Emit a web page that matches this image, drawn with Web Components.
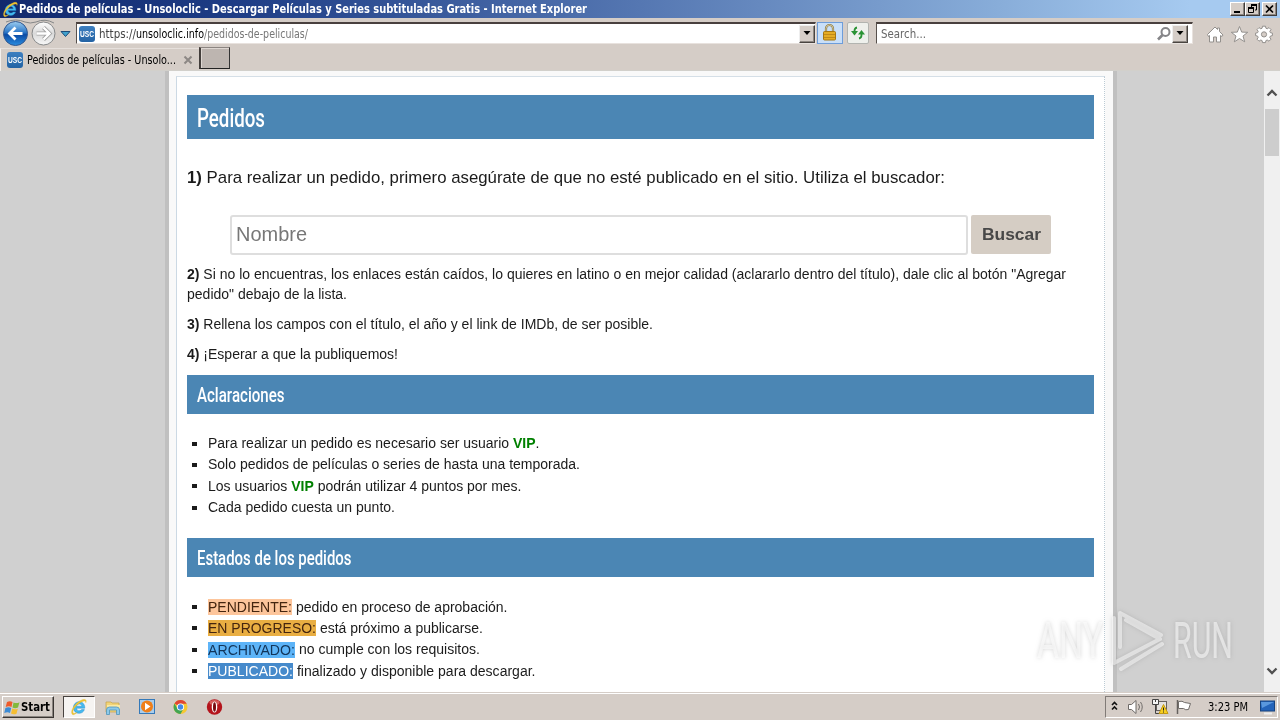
<!DOCTYPE html>
<html lang="es">
<head>
<meta charset="utf-8">
<title>Pedidos de películas - Unsoloclic</title>
<style>
html,body{margin:0;height:100%;overflow:hidden}
body{width:1280px;height:720px;font-family:"Liberation Sans",Arial,sans-serif}
</style>
</head>
<body>
<desktop-screen></desktop-screen>
<script>
const define = (name, html, after) => customElements.define(name, class extends HTMLElement {
  constructor(){ super(); this.attachShadow({mode:'open'}); }
  connectedCallback(){
    if(this.shadowRoot.childNodes.length) return;
    this.shadowRoot.innerHTML = html;
    if(after) after(this);
  }
});

/* One line of text set to a fixed measure (attribute w, in px). */
define('fit-text', `<style>:host{display:block;white-space:nowrap;flex:none}span{display:inline-block;transform-origin:0 50%;white-space:pre}</style><span><slot></slot></span>`, el => {
  const s = el.shadowRoot.querySelector('span'), w = +el.getAttribute('w');
  el.style.width = w + 'px';
  const n = s.getBoundingClientRect().width;
  if(n) s.style.transform = `scaleX(${w / n})`;
});

define('ie-logo', `<style>:host{display:block;flex:none}svg{display:block;width:100%;height:100%}</style>
<svg viewBox="0 0 20 20"><path d="M16.400 11.300H7.200c.2 1.800 1.400 2.900 3.100 2.900 1.300 0 2.100-.5 2.600-1.300h3.100c-.9 2.600-3 4.100-5.800 4.100-3.800 0-6.400-2.600-6.400-6.300 0-3.800 2.700-6.600 6.400-6.600s6.400 2.900 6.200 7.200zM7.300 9.100h5.900c-.2-1.600-1.300-2.500-2.900-2.500s-2.700.9-3 2.500z" fill="#45baf0" stroke="#1f86c9" stroke-width=".5"/><path d="M2.800 18.300C-.7 15.500 5.500 4.800 13.200 2.100 17 .8 18.800 2 17.600 5.200c.1-2.200-2-2.300-5-.7C6.700 7.500 2 14.200 3.400 16.600c.7 1 2.700.5 4.600-.7-2 1.900-4 3.100-5.200 2.400z" fill="#f3c630" stroke="#d8b02c" stroke-width=".4"/></svg>`);

define('usc-icon', `<style>:host{display:flex;width:16px;height:16px;border-radius:3px;background:linear-gradient(#3d7fc0,#2463a4);color:#fff;align-items:center;justify-content:center;flex:none;font:bold 9px/16px "Liberation Sans",sans-serif}</style><fit-text w="14">USC</fit-text>`);

define('caption-button', `<style>:host{display:block;box-sizing:border-box;height:14px;width:15px;background:#d5cdc7;border:1px solid;border-color:#fff #403c3a #403c3a #fff;box-shadow:inset -1px -1px #8b8580}svg{display:block}</style><svg width="13" height="12"></svg>`, el => {
  const k = el.getAttribute('kind');
  el.shadowRoot.querySelector('svg').innerHTML = {
    min:'<path d="M3 9h6" stroke="#000" stroke-width="2"/>',
    restore:'<path d="M5 1.500h6M5 2.500h6M5.500 2v3M10.500 2v5H9M2 5.500h6M2 4.500h6M2.500 5v4.500h5V5" fill="none" stroke="#000"/>',
    close:'<path d="M3 2.500l7 7M10 2.500l-7 7" stroke="#000" stroke-width="1.700"/>'}[k];
});

define('title-bar', `<style>
:host{display:flex;height:18px;box-sizing:border-box;padding:0 3px 0 2px;align-items:center;background:linear-gradient(90deg,#12296d 0,#1d3c85 18%,#5577b2 50%,#88add9 78%,#a6caf0 93%);color:#fff;font:bold 11.500px/18px "DejaVu Sans Condensed","DejaVu Sans",sans-serif}
ie-logo{width:17px;height:17px;margin-top:1px}.g{flex:1}.b{display:flex}.x{margin-left:2px}
</style><ie-logo></ie-logo><fit-text w="568">Pedidos de películas - Unsoloclic - Descargar Películas y Series subtituladas Gratis - Internet Explorer</fit-text><div class="g"></div><div class="b"><caption-button kind="min"></caption-button><caption-button kind="restore"></caption-button><caption-button class="x" kind="close"></caption-button></div>`);

define('drop-button', `<style>:host{display:flex;box-sizing:border-box;width:16px;height:18px;background:#d5cdc7;border:1px solid;border-color:#eee #494440 #494440 #eee;box-shadow:inset -1px -1px #8d8782;align-items:center;justify-content:center;flex:none}</style><svg width="8" height="5"><path d="M0.500 0h7L4 4z"/></svg>`);

define('nav-bar', `<style>
:host{display:flex;box-sizing:border-box;height:29px;background:#d5cdc7;font:11.500px/18px "DejaVu Sans Condensed","DejaVu Sans",sans-serif;align-items:flex-start}
.nav{width:76px;height:29px;display:block;flex:none}
.field{box-sizing:border-box;display:flex;align-items:center;height:22px;margin-top:4px;background:#fff;border-top:2px solid #49403e;border-left:1px solid #57504c;border-bottom:1px solid #e8e2de;border-right:1px solid #e8e2de}
.addr{width:740px;padding-left:2px}.addr fit-text.first{margin-left:4px}
.g{flex:1}.sq{box-sizing:border-box;height:22px;margin-top:4px;display:block;flex:none}
.lock{width:26px;background:#c9dff8;border:1px solid #6d9dda;margin-left:1px}
.ref{width:22px;background:#eef0ec;border:1px solid #b2b4b0;border-radius:2px;margin-left:4px}
.search{width:317px;margin-left:7px;padding-left:4px;color:#666;padding-right:4px}
.tools{margin:7px 7px 0 13px}
</style>
<svg class="nav" viewBox="0 0 76 29"><defs><linearGradient id="b" x2="0" y2="1"><stop stop-color="#9ccdf0"/><stop offset=".45" stop-color="#2d78c8"/><stop offset=".55" stop-color="#0b4ba5"/><stop offset="1" stop-color="#2b8de0"/></linearGradient><linearGradient id="w" x2="0" y2="1"><stop stop-color="#fff"/><stop offset=".5" stop-color="#d9d9d9"/><stop offset="1" stop-color="#f8f8f8"/></linearGradient></defs>
<path d="M6 4Q16 0 25 4Q30 6 36 4Q45 0 54 5" fill="none" stroke="#858788"/>
<circle cx="15.500" cy="15.500" r="12" fill="url(#b)" stroke="#31578f"/><path d="M22.500 15.500H10M15.500 9.500l-6 6 6 6" fill="none" stroke="#fff" stroke-width="2.800"/>
<circle cx="43.500" cy="15.500" r="11.500" fill="url(#w)" stroke="#868889"/><path d="M36.500 15.500H49M43.500 9.500l6 6-6 6" fill="none" stroke="#a0a0a0" stroke-width="4"/><path d="M36.500 15.500H49M43.500 9.500l6 6-6 6" fill="none" stroke="#fff" stroke-width="2.400"/>
<path d="M61 13.500h9l-4.500 5z" fill="#3fa0cc" stroke="#1c4b79"/></svg>
<div class="field addr"><usc-icon></usc-icon><fit-text class="first" w="37" style="color:#444">https://</fit-text><fit-text w="68" style="color:#000">unsoloclic.info</fit-text><fit-text w="104" style="color:#777">/pedidos-de-peliculas/</fit-text><div class="g"></div><drop-button></drop-button></div>
<svg class="sq lock" viewBox="0 0 24 20"><path d="M8 10V5.500a3.500 3.500 0 0 1 7 0V10" fill="none" stroke="#8f7c45" stroke-width="2.200"/><path d="M8 10V5.500a3.500 3.500 0 0 1 7 0V10" fill="none" stroke="#e0d5b0" stroke-width=".8"/><rect x="5.500" y="8.500" width="12" height="8.500" rx="1" fill="#e5ac24" stroke="#a57713"/><path d="M6 11.500h11M6 14.500h11" stroke="#c18a18"/></svg>
<svg class="sq ref" viewBox="0 0 20 20"><path d="M9 4.500Q6.500 5 6.500 8v1" fill="none" stroke="#299334" stroke-width="1.800"/><path d="M3 8h7l-3.500 4.500z" fill="#299334"/><path d="M11 15.500Q13.500 15 13.500 12v-1" fill="none" stroke="#299334" stroke-width="1.800"/><path d="M10 11.500h7L13.500 7z" fill="#299334"/></svg>
<div class="field search"><fit-text w="45">Search...</fit-text><div class="g"></div><svg width="16" height="16" style="margin-right:0"><circle cx="9.500" cy="6" r="4" fill="#fff" stroke="#858588" stroke-width="2"/><path d="M6.500 9L2 13.500" stroke="#858588" stroke-width="2.600"/></svg><drop-button></drop-button></div>
<div class="g"></div>
<svg class="tools" width="67" height="19" viewBox="0 0 67 19" fill="#fff" stroke="#93908d" stroke-width="1"><path d="M1.500 9.500L9 2l2.500 2.500V3h2v3.500L17 10l-1 1.500-1.500-1V17h-4v-5h-3v5h-4v-6.500l-1 1z"/><path d="M33.500 1.500l2.200 5.600 6 .2-4.700 3.700 1.700 5.800-5.200-3.300-5.200 3.300 1.700-5.800-4.700-3.700 6-.2z"/><path d="M56.500 2h3l.4 2 1.300.6 1.800-1.200 2 2-1.200 1.800.6 1.300 2 .4v2.500l-2 .5-.6 1.300L65 15l-2 2-1.800-1.200-1.300.6-.4 2h-3l-.4-2-1.300-.6L53 17l-2-2 1.200-1.800-.6-1.300-2-.5V8.900l2-.4.6-1.300L51 5.400l2-2 1.800 1.200 1.300-.6z" transform="translate(0 -.8)"/><circle cx="58" cy="9.400" r="2.600" fill="#d5cdc7"/></svg>`);

define('tab-strip', `<style>
:host{display:flex;height:24px;background:#d5cdc7;font:11.500px/20px "DejaVu Sans Condensed","DejaVu Sans",sans-serif;box-sizing:border-box;border-bottom:1px solid #d2d0cb}
.tab{display:flex;align-items:center;box-sizing:border-box;width:199px;height:23px;margin-top:1px;padding-left:6px;border-left:1px solid #f4f0ed;border-top:1px solid #e6e0dc}
.tab fit-text{margin-left:4px}.tab svg{margin-left:7px}
.new{box-sizing:border-box;width:31px;height:22px;background:#bdb5b0;border:1px solid;border-color:#8c8581 #333 #222 #433e3b;border-width:1px 1px 1px 2px;box-shadow:inset 1px 1px #ddd6d1}
</style><div class="tab"><usc-icon></usc-icon><fit-text w="149">Pedidos de películas - Unsolo...</fit-text><svg width="10" height="10"><path d="M1.500 1.500l7 7M8.500 1.500l-7 7" stroke="#8d8885" stroke-width="2"/></svg></div><div class="new"></div>`);

define('section-title', `<style>:host{display:flex;box-sizing:border-box;align-items:center;background:#4b86b4;color:#fff;padding:2px 10px 0;height:39px;font:500 20px/37px "Roboto",sans-serif}:host([big]){height:44px;font-size:26px;line-height:42px;font-weight:500}slot{display:block}</style><slot></slot>`);

define('bullet-row', `<style>:host{display:flex;align-items:center;height:21.330px;font-size:14px;line-height:21px;padding-left:5px}i{width:5px;height:4px;background:#1b1b1b;margin-right:11px;flex:none;margin-top:0}</style><i></i><slot></slot>`);

define('search-form', `<style>
:host{display:flex;gap:3px;margin-left:43px;align-items:flex-start}
.in{box-sizing:border-box;width:738px;height:40px;border:2px solid #dedede;border-radius:3px;padding-left:4px;font-size:20.500px;line-height:33px;color:#777}
.bt{box-sizing:border-box;width:80px;height:39px;border-radius:2px;background:#d5cdc4;color:#484848;font:bold 17px/39px "Liberation Sans",sans-serif;padding-left:11px}
</style><div class="in"><fit-text w="71">Nombre</fit-text></div><div class="bt"><fit-text w="59">Buscar</fit-text></div>`);

define('page-body', `<style>
:host{display:block;box-sizing:border-box;width:952px;height:621px;overflow:hidden;border:solid #c0c0c0;border-width:0 4px;background:#f9f9f9;padding:5px 8px 0 7px;color:#1b1b1b;font-size:14px;line-height:20px}
.box{box-sizing:border-box;height:640px;border:1px dotted #bccbd4;border-left:1px solid #ccd9e4;border-top-style:solid;border-top-color:#d5dfe7;background:#fff;padding:18px 10px 0}
.p1{font-size:17px;line-height:24px;margin:27px 0 25px}
p{margin:0 0 10px}.p2{margin-top:9px}.p4{margin-bottom:11px}
.l1{padding:19px 0 19.700px}.l2{padding-top:19.500px}
mark{color:#44250f;background:#fdc59b;display:block;line-height:16px}.v{color:#008000}
</style><div class="box">
<section-title big><fit-text w="68">Pedidos</fit-text></section-title>
<p class="p1"><fit-text w="758"><b>1)</b> Para realizar un pedido, primero asegúrate de que no esté publicado en el sitio. Utiliza el buscador:</fit-text></p>
<search-form></search-form>
<p class="p2"><fit-text w="879"><b>2)</b> Si no lo encuentras, los enlaces están caídos, lo quieres en latino o en mejor calidad (aclararlo dentro del título), dale clic al botón "Agregar</fit-text><fit-text w="160">pedido" debajo de la lista.</fit-text></p>
<p><fit-text w="466"><b>3)</b> Rellena los campos con el título, el año y el link de IMDb, de ser posible.</fit-text></p>
<p class="p4"><fit-text w="211"><b>4)</b> ¡Esperar a que la publiquemos!</fit-text></p>
<section-title><fit-text w="87.500">Aclaraciones</fit-text></section-title>
<div class="l1"><bullet-row><fit-text w="331.500">Para realizar un pedido es necesario ser usuario <b class="v">VIP</b>.</fit-text></bullet-row>
<bullet-row><fit-text w="372">Solo pedidos de películas o series de hasta una temporada.</fit-text></bullet-row>
<bullet-row><fit-text w="313.500">Los usuarios <b class="v">VIP</b> podrán utilizar 4 puntos por mes.</fit-text></bullet-row>
<bullet-row><fit-text w="187">Cada pedido cuesta un punto.</fit-text></bullet-row></div>
<section-title><fit-text w="154.500">Estados de los pedidos</fit-text></section-title>
<div class="l2"><bullet-row><mark><fit-text w="84">PENDIENTE:</fit-text></mark><fit-text w="215.500"> pedido en proceso de aprobación.</fit-text></bullet-row>
<bullet-row><mark style="background:#e9ae42"><fit-text w="108">EN PROGRESO:</fit-text></mark><fit-text w="167"> está próximo a publicarse.</fit-text></bullet-row>
<bullet-row><mark style="background:#5db4f8;color:#12355a"><fit-text w="87">ARCHIVADO:</fit-text></mark><fit-text w="185"> no cumple con los requisitos.</fit-text></bullet-row>
<bullet-row><mark style="background:#468acb;color:#fff"><fit-text w="85">PUBLICADO:</fit-text></mark><fit-text w="242.500"> finalizado y disponible para descargar.</fit-text></bullet-row></div>
</div>`);

define('scroll-bar', `<style>:host{display:flex;flex-direction:column;width:16px;height:621px;background:#f0f0f0;box-sizing:border-box;align-items:center;padding:17px 0 16px}
.t{width:14px;height:47px;background:#cdcdcd;margin-top:11px}.g{flex:1}svg{display:block}</style>
<svg width="12" height="10"><path d="M1.500 7.500L6 3l4.500 4.500" fill="none" stroke="#505050" stroke-width="2.300"/></svg><div class="t"></div><div class="g"></div><svg width="12" height="10"><path d="M1.500 2.500L6 7l4.500-4.500" fill="none" stroke="#505050" stroke-width="2.300"/></svg>`);

define('task-bar', `<style>
:host{display:flex;height:28px;box-sizing:border-box;background:#d5cdc7;border-top:1px solid #d5cdc7;box-shadow:inset 0 1px #fff;align-items:flex-start;padding:4px 2px 0;font:11.500px/20px "DejaVu Sans Condensed","DejaVu Sans",sans-serif}
.start{box-sizing:border-box;display:flex;align-items:center;width:52px;height:22px;border:1px solid;border-color:#fff #3a3532 #3a3532 #fff;box-shadow:inset -1px -1px #8b8580;font-weight:bold;font-size:12px;padding-left:1px;gap:0;margin-top:-1px}
.act{box-sizing:border-box;width:32px;height:22px;margin:-1px 0 0 9px;background:#f6f4f2;border:1px solid;border-color:#484340 #fff #fff #484340;display:flex;justify-content:center;align-items:center}
.act ie-logo{width:18px;height:18px}svg{display:block;flex:none}.i1{margin:1px 0 0 9px}.g{flex:1}
.tray{display:flex;box-sizing:border-box;width:173px;height:22px;margin-top:-1px;border:1px solid;border-color:#817b77 #fff #fff #817b77;align-items:center}
</style>
<div class="start"><svg width="17" height="17"><path d="M3 3q3-1.500 5.500 0L7.500 8Q5 6.500 1.700 8z" fill="#ef5b2b"/><path d="M9.500 3.400q3 1.500 6-.2L14 8.500q-3 1.500-5.500 0z" fill="#83b93b"/><path d="M1.400 9Q4.500 7.700 7.200 9L6 14Q3.500 12.500.3 14z" fill="#3c8bd5"/><path d="M8.300 9.500q2.700 1.500 5.500.2l-1.300 5Q9.500 16 7 14.500z" fill="#f5bd31"/></svg><fit-text w="29">Start</fit-text></div>
<div class="act"><ie-logo></ie-logo></div>
<svg class="i1" width="120" height="19" viewBox="0 0 120 19"><path d="M2 4h5l1 1h7v9H2z" fill="#f2d477" stroke="#c4a047" stroke-width=".7"/><path d="M3 7h13v4H3z" fill="#fae9a4"/><path d="M2.500 16.500V12q0-3 3-3h7q3 0 3 3v4.500h-3V12h-7v4.500z" fill="#8cc9e9" stroke="#4f94bc" stroke-width=".8"/>
<rect x="35.500" y="1.500" width="15" height="14" fill="#a9cdec" stroke="#3579b9"/><circle cx="43" cy="8.500" r="6" fill="#ef7f1a"/><path d="M41 4.800l5.500 3.700-5.500 3.700z" fill="#fff"/>
<g transform="translate(76.500 9)"><circle r="7" fill="#f6c832"/><path d="M0 0L-6 -3.500A7 7 0 0 1 6.200 -3.200H0z" fill="#df4535"/><path d="M-6 -3.500A7 7 0 0 0 0 7L3 1.700H-3z" fill="#42a553"/><circle r="3.600" fill="#fff"/><circle r="2.700" fill="#4389e6"/></g>
<circle cx="110.500" cy="9" r="7.700" fill="#b4141c"/><ellipse cx="110.500" cy="4.500" rx="5" ry="2.600" fill="#d45c5c"/><ellipse cx="110.500" cy="9" rx="2.800" ry="5.600" fill="#fff"/><ellipse cx="110.500" cy="9" rx="1.500" ry="4.700" fill="#780a10"/></svg>
<div class="g"></div>
<div class="tray"><svg width="94" height="20" viewBox="1107 697 94 20"><path d="M1113 705l2.500-2.500 2.500 2.500M1113 709.500l2.500-2.500 2.500 2.500" fill="none" stroke="#111" stroke-width="1.600"/><path d="M1129.500 704.500h3l4.500-4v13l-4.500-4h-3z" fill="#fff" stroke="#6e6a67"/><path d="M1139.500 704q2 3 0 6M1141.500 702q3.500 5 0 10" fill="none" stroke="#716d6a"/><rect x="1157.500" y="701.500" width="10" height="9" fill="#e4e2df" stroke="#66615e"/><path d="M1153.500 699.500h6v5h-6z" fill="#f5f5f5" stroke="#444"/><path d="M1156.500 699v3M1156.500 705v8.500h5" fill="none" stroke="#444"/><path d="M1164.500 704.500l4.500 9h-9z" fill="#f7cf20" stroke="#c49a12"/><path d="M1164.500 707.500v3M1164.500 711.500v1" stroke="#222"/><path d="M1178.500 700v14" stroke="#65615e" stroke-width="1.500"/><path d="M1179.500 701.500q4-1 6 1l6 1-2 6q-3 1-5-1h-5z" fill="#fff" stroke="#706c69"/></svg><fit-text style="margin-left:8px" w="40">3:23 PM</fit-text><svg style="margin-left:11px" width="18" height="16"><rect x="1.500" y="2" width="14" height="10" fill="#2464ba" stroke="#16437f"/><path d="M2 3h13L3 9z" fill="#5a98de"/><path d="M5 14.500h8" stroke="#eee" stroke-width="2"/></svg></div>`);

define('any-run', `<style>:host{display:flex;align-items:center;gap:8px;width:196px;height:64px;color:rgba(255,255,255,.55);font:50px/64px "Roboto",sans-serif;filter:drop-shadow(0 0 2px rgba(110,110,110,.5))}svg{display:block;flex:none}</style>
<fit-text w="66">ANY</fit-text><svg width="54" height="64" viewBox="1112 609 54 64"><path d="M1115 618v29M1121 660v-47l41 22M1121 619l38 22M1115 663l46-24M1122 669l41-23M1126 626l24 14" fill="none" stroke="none"/><path d="M1115 618v45l46-24-34-19M1121 647v-34l41 22-4 2M1122 669l41-25" fill="none" stroke="#fff" stroke-opacity=".5" stroke-width="4" stroke-linejoin="round" stroke-linecap="round"/></svg><fit-text w="60">RUN</fit-text>`);

define('desktop-screen', `<style>
:host{display:block;width:1280px;height:720px;overflow:hidden;position:relative}
.view{display:flex;height:621px;background:#d0d0d0}page-body{margin-left:165px}.g{flex:1}
any-run{position:absolute;left:1037px;top:609px}
</style><title-bar></title-bar><nav-bar></nav-bar><tab-strip></tab-strip><div class="view"><page-body></page-body><div class="g"></div><scroll-bar></scroll-bar></div><task-bar></task-bar><any-run></any-run>`);
</script>
</body>
</html>
